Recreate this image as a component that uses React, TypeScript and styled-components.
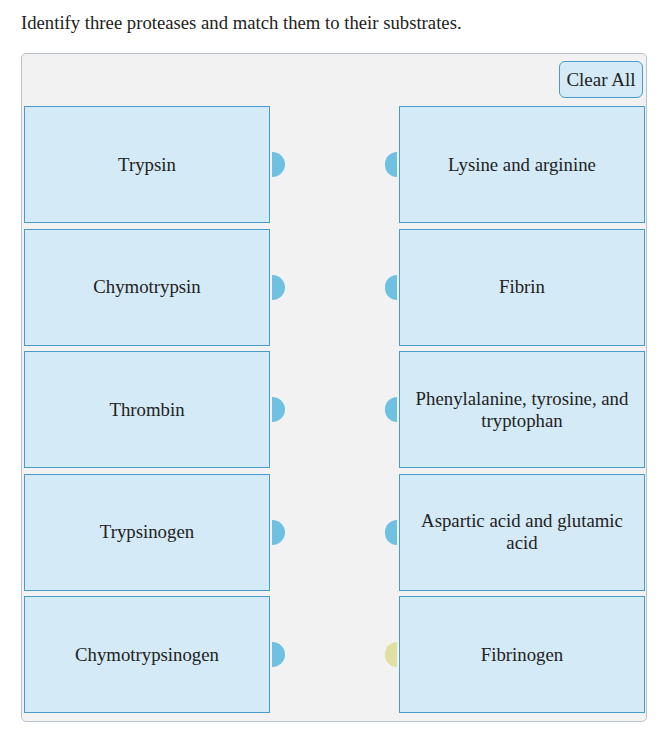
import styled, {createGlobalStyle} from 'styled-components';

const SERIF = `"Liberation Serif", "Times New Roman", serif`

const GlobalStyle = createGlobalStyle`
  body {
    margin: 0;
    background: #ffffff;
    font-family: ${SERIF};
    color: #222222;
  }
`

const Page = styled.div`
  padding: 12px 14px 0 21px;
`

const Prompt = styled.p`
  margin: 0 0 19px;
  font-size: 18.7px;
  line-height: 22px;
`

const Board = styled.div`
  width: 626px;
  box-sizing: border-box;
  background-color: #f2f2f2;
  border: 1px solid #b9c2cc;
  border-radius: 5px;
  padding: 7px 1px 8px 2px;
`

const Toolbar = styled.div`
  display: flex;
  justify-content: flex-end;
  padding-right: 2px;
  margin-bottom: 8px;
`

const ClearButton = styled.button`
  height: 37px;
  width: 84px;
  background-color: #d4eaf7;
  border: 1px solid #4a9bc7;
  border-radius: 6px;
  font-family: ${SERIF};
  font-size: 19px;
  color: #222222;
  padding: 0;
  cursor: pointer;
`

const Rows = styled.div`
  display: flex;
  flex-direction: column;
  gap: 5.5px;
`

const Row = styled.div`
  display: flex;
  align-items: center;
`

const Card = styled.div`
  width: 246px;
  height: 117px;
  box-sizing: border-box;
  display: flex;
  align-items: center;
  justify-content: center;
  text-align: center;
  padding: 0 12px;
  background-color: #d4eaf7;
  border: 1px solid #4a9bc7;
  font-size: 18.8px;
  line-height: 22px;
`

const Spacer = styled.div`
  flex: 1;
`

interface DotProps {
    $side: 'left' | 'right';
    $color: string;
}

const Dot = styled.div<DotProps>`
  width: 12.5px;
  height: 25px;
  background-color: ${p => p.$color};
  border-radius: ${p => p.$side === 'left' ? '0 12.5px 12.5px 0' : '12.5px 0 0 12.5px'};
  margin: ${p => p.$side === 'left' ? '0 0 0 2px' : '0 2px 0 0'};
`

const BLUE = '#6fc1e1'
const YELLOW = '#dfdfa1'

const pairs = [
    {left: 'Trypsin', right: 'Lysine and arginine', rightColor: BLUE},
    {left: 'Chymotrypsin', right: 'Fibrin', rightColor: BLUE},
    {left: 'Thrombin', right: 'Phenylalanine, tyrosine, and tryptophan', rightColor: BLUE},
    {left: 'Trypsinogen', right: 'Aspartic acid and glutamic acid', rightColor: BLUE},
    {left: 'Chymotrypsinogen', right: 'Fibrinogen', rightColor: YELLOW},
]

const App = () => {
    return (
        <>
            <GlobalStyle/>
            <Page>
                <Prompt>Identify three proteases and match them to their substrates.</Prompt>
                <Board>
                    <Toolbar>
                        <ClearButton>Clear All</ClearButton>
                    </Toolbar>
                    <Rows>
                        {pairs.map(p => (
                            <Row key={p.left}>
                                <Card>{p.left}</Card>
                                <Dot $side="left" $color={BLUE}/>
                                <Spacer/>
                                <Dot $side="right" $color={p.rightColor}/>
                                <Card>{p.right}</Card>
                            </Row>
                        ))}
                    </Rows>
                </Board>
            </Page>
        </>
    )
}

export default App
